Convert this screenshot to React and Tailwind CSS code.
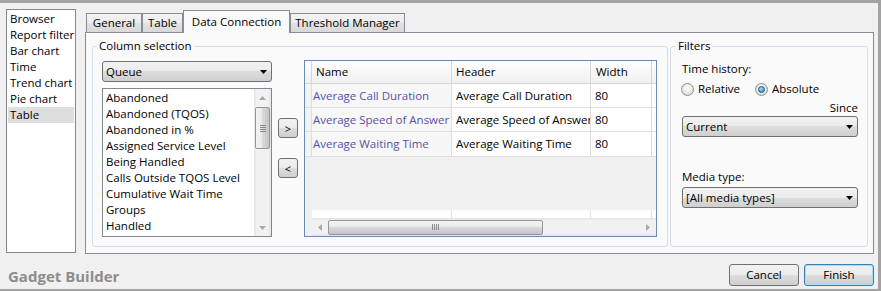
import React from "react";

const btnGrad = "bg-[linear-gradient(#f2f2f2,#ebebeb_50%,#dddddd_50%,#cfcfcf)]";

function Arrow({ dir = "down", color = "#000" }) {
  const d = {
    down: "M0 0H7L3.5 4Z",
    up: "M0 4H7L3.5 0Z",
    left: "M4 0V7L0 3.5Z",
    right: "M0 0V7L4 3.5Z",
  }[dir];
  const horiz = dir === "left" || dir === "right";
  return (
    <svg width={horiz ? 4 : 7} height={horiz ? 7 : 4} viewBox={horiz ? "0 0 4 7" : "0 0 7 4"}>
      <path d={d} fill={color} />
    </svg>
  );
}

function Combo({ label, className = "" }) {
  return (
    <div className={`flex items-center h-[21px] rounded-[3px] border border-[#707070] ${btnGrad} pl-[3px] pr-[4px] ${className}`}>
      <span className="flex-1 leading-[16px] whitespace-nowrap">{label}</span>
      <Arrow />
    </div>
  );
}

function Tab({ children, w, active }) {
  if (active) {
    return (
      <div className={`${w} h-[23px] -mb-px relative z-10 border border-b-0 border-[#898c95] bg-[#fafafa] flex items-center justify-center pb-[1px] whitespace-nowrap`}>
        {children}
      </div>
    );
  }
  return (
    <div className={`${w} h-[19px] border border-b-0 border-[#898c95] bg-[linear-gradient(#f3f3f3,#ebebeb_50%,#e2e2e2_50%,#d9d9d9)] flex items-center justify-center whitespace-nowrap`}>
      {children}
    </div>
  );
}

function Radio({ checked }) {
  return (
    <span className="w-[13px] h-[13px] rounded-full border border-[#8e8f8f] bg-[radial-gradient(circle_at_50%_35%,#ffffff,#d2d2d2)] flex items-center justify-center shrink-0">
      {checked && (
        <span className="w-[7px] h-[7px] rounded-full border border-[#1b5a8c] bg-[radial-gradient(circle_at_40%_35%,#a6e3ff,#1d7bc6)]" />
      )}
    </span>
  );
}

function SmallBtn({ children, className = "" }) {
  return (
    <div className={`w-[20px] h-[20px] rounded-[3px] border border-[#707070] ${btnGrad} flex items-center justify-center leading-none text-[11px] ${className}`}>
      {children}
    </div>
  );
}

const listItems = [
  "Abandoned",
  "Abandoned (TQOS)",
  "Abandoned in %",
  "Assigned Service Level",
  "Being Handled",
  "Calls Outside TQOS Level",
  "Cumulative Wait Time",
  "Groups",
  "Handled",
];

function Listbox({ className = "" }) {
  return (
    <div className={`flex h-[149px] border border-[#828790] bg-white ${className}`}>
      <div className="flex-1 pt-px pl-[3px] overflow-hidden">
        {listItems.map((it) => (
          <div key={it} className="h-[16px] leading-[16px] whitespace-nowrap">
            {it}
          </div>
        ))}
      </div>
      <div className="w-[17px] flex flex-col bg-[linear-gradient(90deg,#e3e3e3,#f1f1f1_15%,#f1f1f1_85%,#e3e3e3)]">
        <div className="h-[17px] flex items-center justify-center">
          <Arrow dir="up" color="#a8a8a8" />
        </div>
        <div className="mt-px mx-px h-[42px] rounded-[2px] border border-[#959595] bg-[linear-gradient(90deg,#f4f4f4,#e9e9e9_50%,#d9d9d9_50%,#c4c4c4)] flex flex-col items-center justify-center gap-[1px]">
          <span className="w-[6px] h-px bg-[#8a8a8a]" />
          <span className="w-[6px] h-px bg-[#8a8a8a]" />
          <span className="w-[6px] h-px bg-[#8a8a8a]" />
          <span className="w-[6px] h-px bg-[#8a8a8a]" />
        </div>
        <div className="flex-1" />
        <div className="h-[17px] flex items-center justify-center">
          <Arrow dir="down" color="#a8a8a8" />
        </div>
      </div>
    </div>
  );
}

const rows = [
  ["Average Call Duration", "Average Call Duration", "80", "h-[24px]"],
  ["Average Speed of Answer", "Average Speed of Answer", "80", "h-[24px]"],
  ["Average Waiting Time", "Average Waiting Time", "80", "h-[25px]"],
];

function Grid() {
  return (
    <div className="ml-[6px] w-[353px] h-[177px] border border-[#688caf] flex flex-col bg-[#f0f0f0] overflow-hidden">
      <div className="flex h-[23px] shrink-0 border-b border-[#d5d5d5] bg-[linear-gradient(#ffffff,#f7f7f7_50%,#f0f0f0)]">
        <div className="w-[7px] border-r border-[#d5d5d5]" />
        <div className="w-[140px] border-r border-[#d5d5d5] pl-[4px] flex items-center">Name</div>
        <div className="w-[139px] border-r border-[#d5d5d5] pl-[4px] flex items-center">Header</div>
        <div className="w-[61px] border-r border-[#d5d5d5] pl-[5px] flex items-center">Width</div>
        <div className="flex-1" />
      </div>
      {rows.map(([n, h, w, hc]) => (
        <div key={n} className={`flex ${hc} shrink-0 border-b border-[#dedede] bg-white`}>
          <div className="w-[7px] border-r border-[#dedede] bg-[#f3f3f3]" />
          <div className="w-[140px] border-r border-[#dedede] pl-px flex items-center bg-[#f7f7f7] text-[#5a4fa8] whitespace-nowrap overflow-hidden">
            {n}
          </div>
          <div className="w-[139px] border-r border-[#dedede] pl-[4px] flex items-center whitespace-nowrap overflow-hidden">
            {h}
          </div>
          <div className="w-[61px] border-r border-[#dedede] pl-[4px] flex items-center">{w}</div>
          <div className="flex-1" />
        </div>
      ))}
      <div className="flex-1" />
      <div className="flex h-[8px] shrink-0 ml-[7px] bg-white">
        <div className="w-[140px] border-r border-[#e3e3e3]" />
        <div className="w-[139px] border-r border-[#e3e3e3]" />
        <div className="w-[61px] border-r border-[#e3e3e3]" />
        <div className="flex-1" />
      </div>
      <div className="flex h-[18px] shrink-0 ml-[7px] items-center bg-[linear-gradient(#e3e3e3,#f1f1f1_15%,#f1f1f1_85%,#e3e3e3)]">
        <div className="w-[16px] flex justify-center">
          <Arrow dir="left" color="#a8a8a8" />
        </div>
        <div className="w-[215px] h-[15px] rounded-[2px] border border-[#959595] bg-[linear-gradient(#f4f4f4,#e9e9e9_50%,#d9d9d9_50%,#c4c4c4)] flex items-center justify-center gap-[1px]">
          <span className="w-px h-[6px] bg-[#8a8a8a]" />
          <span className="w-px h-[6px] bg-[#8a8a8a]" />
          <span className="w-px h-[6px] bg-[#8a8a8a]" />
          <span className="w-px h-[6px] bg-[#8a8a8a]" />
        </div>
        <div className="flex-1" />
        <div className="w-[17px] flex justify-center">
          <Arrow dir="right" color="#a8a8a8" />
        </div>
      </div>
    </div>
  );
}

const nav = ["Browser", "Report filter", "Bar chart", "Time", "Trend chart", "Pie chart", "Table"];

export default function App() {
  return (
    <div className="w-[881px] h-[291px] bg-[#f0f0f0] border-t-[3px] border-r-[3px] border-b-[2px] border-[#a3a3a3] flex flex-col text-black text-[11.5px] [font-family:'Open_Sans',sans-serif] overflow-hidden">
      <div className="flex h-[251px] pt-[6px] pl-[6px]">
        <div className="w-[70px] h-[244px] border border-[#828790] bg-white p-px overflow-hidden">
          {nav.map((n) => (
            <div
              key={n}
              className={`h-[16px] leading-[16px] pl-[2px] whitespace-nowrap ${n === "Table" ? "bg-[#dedede]" : ""}`}
            >
              {n}
            </div>
          ))}
        </div>

        <div className="ml-[9px] mt-px w-[789px] flex flex-col">
          <div className="flex items-end h-[22px] pl-px">
            <Tab w="w-[56px]">General</Tab>
            <Tab w="w-[41px]">Table</Tab>
            <Tab w="w-[107px]" active>
              Data Connection
            </Tab>
            <Tab w="w-[115px]">Threshold Manager</Tab>
          </div>
          <div className="h-[222px] border border-[#898c95] bg-[#fafafa] flex pl-[6px] pr-[5px] pt-[5px] pb-[6px] gap-[2px]">
            <fieldset className="w-[576px] h-[209px] min-w-0 border border-[#d5dfe5] rounded-[3px]">
              <legend className="ml-[4px] px-[2px] leading-[16px]">Column selection</legend>
              <div className="flex pl-[9px] pt-[6px]">
                <div className="w-[170px] flex flex-col">
                  <Combo label="Queue" className="mt-px" />
                  <Listbox className="mt-[6px]" />
                </div>
                <div className="ml-[6px] w-[20px] flex flex-col">
                  <SmallBtn className="mt-[58px]">&gt;</SmallBtn>
                  <SmallBtn className="mt-[20px]">&lt;</SmallBtn>
                </div>
                <Grid />
              </div>
            </fieldset>

            <fieldset className="w-[198px] h-[209px] min-w-0 border border-[#d5dfe5] rounded-[3px]">
              <legend className="ml-[5px] px-[2px] leading-[16px]">Filters</legend>
              <div className="flex flex-col pl-[11px] pr-[9px] pt-[7px]">
                <div className="h-[16px] leading-[16px]">Time history:</div>
                <div className="mt-[4px] h-[16px] flex items-center -ml-px">
                  <div className="w-[74px] flex items-center">
                    <Radio />
                    <span className="ml-[4px] leading-[16px]">Relative</span>
                  </div>
                  <div className="flex items-center">
                    <Radio checked />
                    <span className="ml-[4px] leading-[16px]">Absolute</span>
                  </div>
                </div>
                <div className="mt-[3px] h-[16px] leading-[16px] text-right">Since</div>
                <Combo label="Current" />
                <div className="mt-[32px] h-[16px] leading-[16px]">Media type:</div>
                <Combo label="[All media types]" className="mt-[2px]" />
              </div>
            </fieldset>
          </div>
        </div>
      </div>

      <div className="flex h-[35px] items-start">
        <div className="pl-[8px] mt-[12px] leading-[20px] text-[15px] font-bold text-[#8d8d8d]">Gadget Builder</div>
        <div className="ml-auto mt-[10px] flex gap-[5px] pr-[4px]">
          <div className={`w-[70px] h-[22px] rounded-[3px] border border-[#707070] ${btnGrad} flex items-center justify-center`}>
            Cancel
          </div>
          <div className={`w-[70px] h-[22px] rounded-[3px] border border-[#3c7fb1] shadow-[inset_0_0_0_1px_#a6dcf7] ${btnGrad} flex items-center justify-center`}>
            Finish
          </div>
        </div>
      </div>
    </div>
  );
}
